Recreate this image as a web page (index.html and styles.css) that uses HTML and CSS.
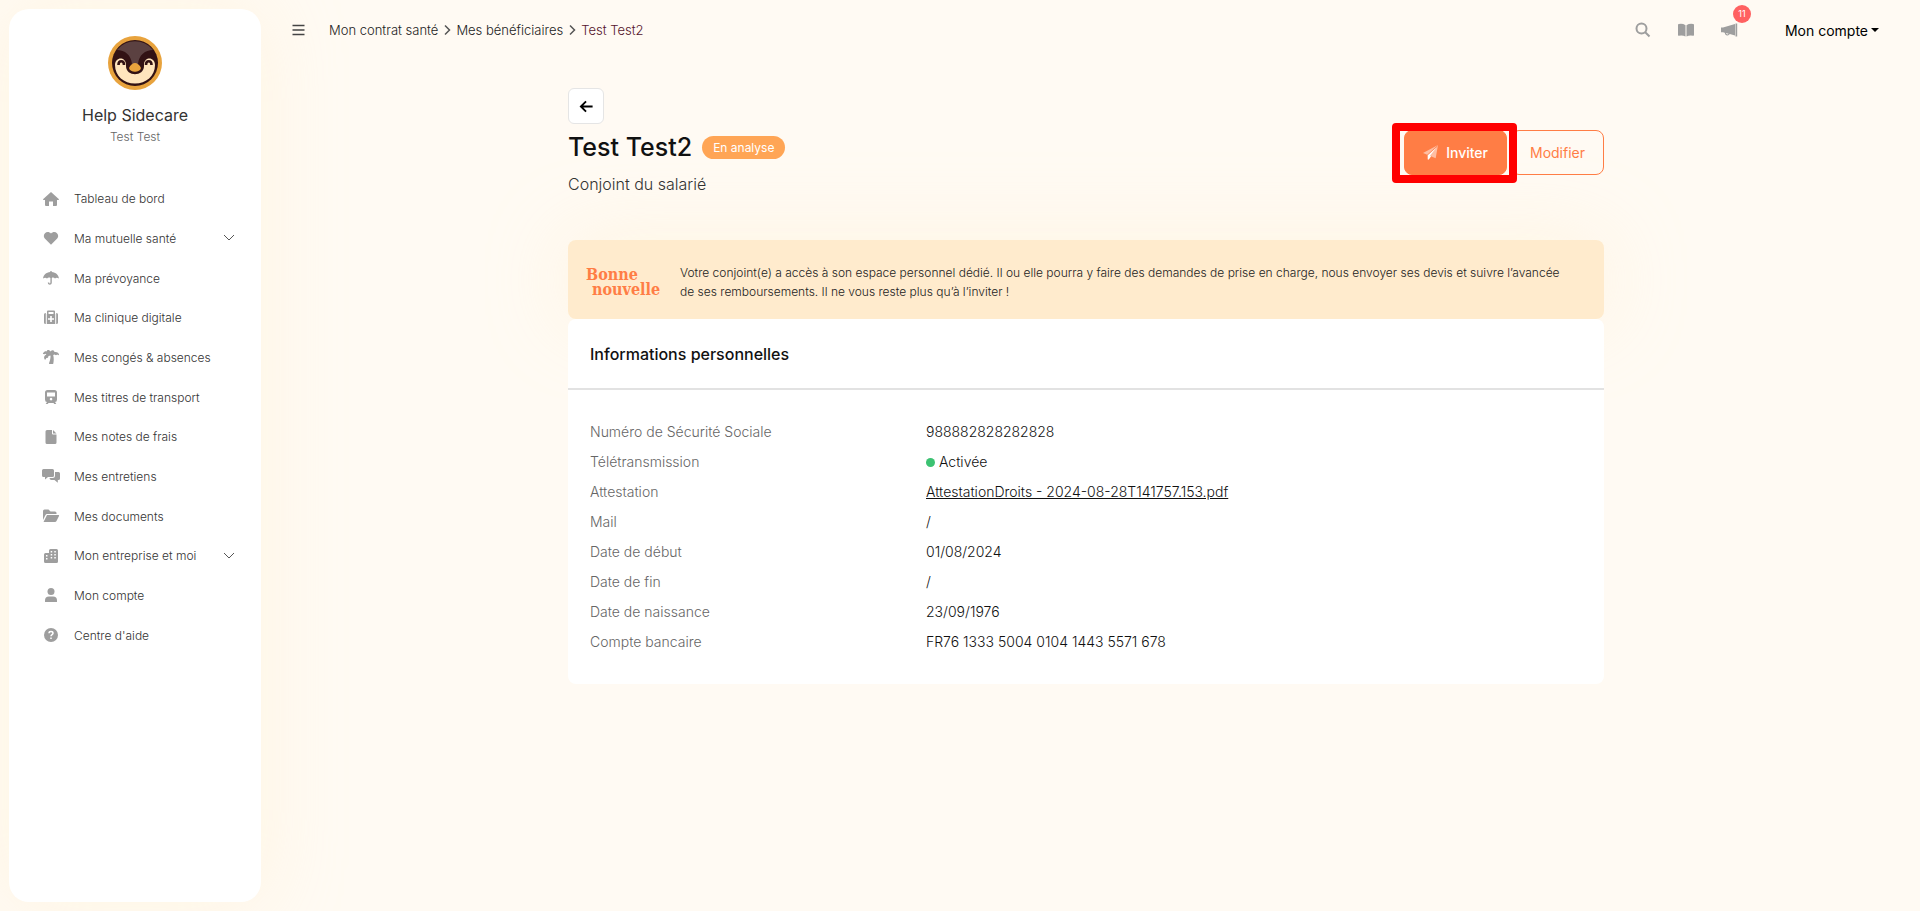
FILE: index.html
```html
<!DOCTYPE html>
<html lang="fr">
<head>
    <meta charset="UTF-8">
    <meta name="viewport" content="width=device-width, initial-scale=1.0">
    <title>Test Test2 - Mes bénéficiaires</title>
    <link rel="stylesheet" href="styles.css">
</head>
<body>

    <!-- Sidebar -->
    <aside class="sidebar">
        <div class="profile">
            <svg class="avatar" viewBox="0 0 54 54" aria-hidden="true">
                <circle cx="27" cy="27" r="27" fill="#e8a33d"/>
                <circle cx="27" cy="27" r="23" fill="#321214"/>
                <path d="M9 14A23 23 0 0 1 45 14C37 14 31 19 30 28H24C23 19 17 14 9 14Z" fill="#5b4141"/>
                <path d="M7 29C7 21 17 20 18 28V30C18 41 36 41 36 30V28C37 20 47 21 47 29C47 40 38 47.500 27 47.500S7 40 7 29Z" fill="#ffe5bd"/>
                <path d="M10.500 29C10.500 24 16 24 16 29M38 29C38 24 43.500 24 43.500 29" fill="none" stroke="#321214" stroke-width="2.600"/>
                <path d="M21 32C22 29 25 27 27 27S32 29 33 32C32 37 22 37 21 32Z" fill="#e8a33d"/>
            </svg>
            <p class="profile-name">Help Sidecare</p>
            <p class="profile-sub">Test Test</p>
        </div>

        <nav class="menu">
            <a href="#" class="menu-item">
                <svg viewBox="0 0 18 18"><path d="M9 2 1 9.300Q.8 10 1.800 10H3V15Q3 16 4 16H7V11.500H11V16H14Q15 16 15 15V10H16.200Q17.200 10 17 9.300Z"/></svg>
                <span>Tableau de bord</span>
            </a>
            <button type="button" class="menu-item">
                <svg viewBox="0 0 18 18"><path d="M9 15.800 2.800 9.500C-.5 5.500 5.200.2 9 4.500C12.800.2 18.500 5.500 15.200 9.500Z"/></svg>
                <span>Ma mutuelle santé</span>
                <svg class="chevron" viewBox="0 0 12 12"><path d="M1 3 6 8 11 3"/></svg>
            </button>
            <a href="#" class="menu-item">
                <svg viewBox="0 0 18 18"><path d="M8.300 2H9.700V3C14 3.400 16.500 6 17 9.500C15.500 8.500 14 8.500 13 9.500C12 8.500 10.800 8.300 9.800 9V13.500C9.800 16.500 5.800 16.500 5.800 13.500H7.200C7.200 14.800 8.400 14.800 8.400 13.500V9C7.200 8.300 6 8.500 5 9.500C4 8.500 2.500 8.500 1 9.500C1.500 6 4 3.400 8.300 3Z"/></svg>
                <span>Ma prévoyance</span>
            </a>
            <a href="#" class="menu-item">
                <svg viewBox="0 0 18 18"><path fill-rule="evenodd" d="M5 5V2.500Q5 1.500 6 1.500H12Q13 1.500 13 2.500V5H13.200V15H4.800V5ZM6.500 5H11.500V3H6.500ZM8.200 7V9.200H6V10.800H8.200V13H9.800V10.800H12V9.200H9.800V7ZM3.800 4H3.500Q2 4 2 5.500V13.500Q2 15 3.500 15H3.800ZM14.200 4H14.500Q16 4 16 5.500V13.500Q16 15 14.500 15H14.200Z"/></svg>
                <span>Ma clinique digitale</span>
            </a>
            <a href="#" class="menu-item">
                <svg viewBox="0 0 18 18"><path d="M8.500 3.500C10 1.500 12 2 12.500 4C15 3.600 17 5 17 6.800Q17 7.200 16.500 7.200L15.200 6.500 14 7.200 12.500 6.500 11.200 7C12 10 11.800 13 11.300 15.500Q11.200 16 10.500 16H7.500Q6.800 16 7 15.300C8.200 12 8.700 9.500 8.500 7.500L6.500 8 6 9.800 4.400 10 3.500 11.600Q2.800 11.900 2.500 11.300C1.500 9 2.500 7.400 4.400 6.500L3.500 5.800 2.400 6.300 1.200 6Q.7 5.800 1 5.300C1.800 3.500 3.400 3 5 3.300C4.700 1.500 7.500 1.500 8.500 3.500Z"/></svg>
                <span>Mes congés &amp; absences</span>
            </a>
            <a href="#" class="menu-item">
                <svg viewBox="0 0 18 18"><path fill-rule="evenodd" d="M5.500 2H12.500Q15 2 15 4.500V11.500Q15 14 13 14L14.300 16H12.300L11.500 15H6.500L5.700 16H3.700L5 14Q3 14 3 11.500V4.500Q3 2 5.500 2ZM5 4.500V8.500H13V4.500ZM9 9.800A1.300 1.300 0 1 0 9.100 9.800Z"/></svg>
                <span>Mes titres de transport</span>
            </a>
            <a href="#" class="menu-item">
                <svg viewBox="0 0 18 18"><path d="M5 2H10V5.500Q10 6.500 11 6.500H14.500V14.500Q14.500 16 13 16H5Q3.500 16 3.500 14.500V3.500Q3.500 2 5 2ZM11 2 14.500 5.500H11Z"/></svg>
                <span>Mes notes de frais</span>
            </a>
            <a href="#" class="menu-item">
                <svg viewBox="0 0 18 18"><path d="M1.500 2H10.500Q12 2 12 3.500V8.500Q12 10 10.500 10H6L3 12.500V10H1.500Q0 10 0 8.500V3.500Q0 2 1.500 2ZM13 5H16.500Q18 5 18 6.500V11.500Q18 13 16.500 13H15.800V15.800L12.500 13H9.500Q7.500 13 7.500 11H10.500Q13 11 13 8.500Z"/></svg>
                <span>Mes entretiens</span>
            </a>
            <a href="#" class="menu-item">
                <svg viewBox="0 0 18 18"><path d="M2.500 2.500H6.500L8.500 4.500H13Q14.500 4.500 14.500 6V7H5Q4 7 3.500 8L1 13V4Q1 2.500 2.500 2.500ZM5 8H16.500Q17.500 8 17 9L14.500 14Q14 15 13 15H1.500Z"/></svg>
                <span>Mes documents</span>
            </a>
            <button type="button" class="menu-item">
                <svg viewBox="0 0 18 18"><path fill-rule="evenodd" d="M7 6V3.500Q7 2 8.500 2H14.500Q16 2 16 3.500V14.500Q16 16 14.500 16H3.500Q2 16 2 14.500V7.500Q2 6 3.500 6ZM4 8V9.500H5.500V8ZM4 11V12.500H5.500V11ZM8.700 4V5.500H10.200V4ZM12.300 4V5.500H13.800V4ZM8.700 7V8.500H10.200V7ZM12.300 7V8.500H13.800V7ZM8.700 10V11.500H10.200V10ZM12.300 10V11.500H13.800V10Z"/></svg>
                <span>Mon entreprise et moi</span>
                <svg class="chevron" viewBox="0 0 12 12"><path d="M1 3 6 8 11 3"/></svg>
            </button>
            <a href="#" class="menu-item">
                <svg viewBox="0 0 18 18"><circle cx="9" cy="5.500" r="3.500"/><path d="M3 16V14.500Q3 10.500 7 10.500H11Q15 10.500 15 14.500V16Z"/></svg>
                <span>Mon compte</span>
            </a>
            <a href="#" class="menu-item">
                <svg viewBox="0 0 18 18"><circle cx="9" cy="9" r="7"/><path d="M7 7.300C7 5 11 5 11 7.300C11 8.700 9 8.500 9 10.200M9 11.400V13" fill="none" stroke="#fff" stroke-width="1.500"/></svg>
                <span>Centre d'aide</span>
            </a>
        </nav>
    </aside>

    <div class="page">
        <!-- Top bar -->
        <header class="topbar">
            <button type="button" class="icon-button burger" aria-label="Menu">
                <svg viewBox="0 0 14 14"><path d="M1 2.500H13M1 7H13M1 11.500H13"/></svg>
            </button>
            <nav class="breadcrumb">
                <a href="#">Mon contrat santé</a>
                <svg viewBox="0 0 8 12"><path d="M2 1.500 6.500 6 2 10.500"/></svg>
                <a href="#">Mes bénéficiaires</a>
                <svg viewBox="0 0 8 12"><path d="M2 1.500 6.500 6 2 10.500"/></svg>
                <a href="#" class="current">Test Test2</a>
            </nav>
            <div class="tools">
                <button type="button" class="icon-button" aria-label="Rechercher">
                    <svg viewBox="0 0 18 18"><path d="M11.500 11.500 15.500 15.500M12.500 7.500A5 5 0 1 1 2.500 7.500A5 5 0 0 1 12.500 7.500Z" fill="none" stroke="#9e9e9e" stroke-width="2"/></svg>
                </button>
                <button type="button" class="icon-button" aria-label="Guide">
                    <svg viewBox="0 0 18 18"><path d="M8.500 4.200V15.500Q5.500 14 1.800 14.800 1 15 1 14V4Q1 3.200 1.800 3 5.500 2.200 8.500 4.200ZM9.500 4.200V15.500Q12.500 14 16.200 14.800 17 15 17 14V4Q17 3.200 16.200 3 12.500 2.200 9.500 4.200Z"/></svg>
                </button>
                <button type="button" class="icon-button" aria-label="Nouveautés">
                    <svg viewBox="0 0 18 18"><path d="M1 6.500H3L15 3V14.500L9.800 13A2.700 2.700 0 0 1 4.700 11.800L3 11.300H1ZM6 12.100A1.400 1.400 0 0 0 8.600 12.700ZM15.500 2.500H17.200V15.500H15.500Z"/></svg>
                    <span class="badge">11</span>
                </button>
                <button type="button" class="account">Mon compte</button>
            </div>
        </header>

        <main class="content">
            <a href="#" class="back" aria-label="Retour">
                <svg viewBox="0 0 16 16"><path d="M14.500 8H2M7.500 2.500 2 8 7.500 13.500"/></svg>
            </a>

            <div class="heading">
                <div>
                    <div class="title-row">
                        <h1>Test Test2</h1>
                        <span class="status">En analyse</span>
                    </div>
                    <p class="relation">Conjoint du salarié</p>
                </div>
                <div class="actions">
                    <button type="button" class="btn btn-primary">
                        <svg viewBox="0 0 16 16"><path d="M16 0 0 8.500 4.500 10.500 16 0Z" opacity=".5"/><path d="M16 0 13.500 14 8.500 12 6 15.500V11.500L14.500 2.500Z" opacity=".5"/><path d="M14.500 2.500 5 10.800V15Q5 16 6 15.500L8.500 12.200 7.500 11.500Z"/></svg>
                        Inviter
                    </button>
                    <button type="button" class="btn btn-outline">Modifier</button>
                </div>
            </div>

            <section class="details">
                <div class="notice">
                    <p class="notice-logo"><span>Bonne</span><span class="second">nouvelle</span></p>
                    <p class="notice-text">Votre conjoint(e) a accès à son espace personnel dédié. Il ou elle pourra y faire des demandes de prise en charge, nous envoyer ses devis et suivre l’avancée de ses remboursements. Il ne vous reste plus qu’à l’inviter !</p>
                </div>

                <div class="card">
                    <h2>Informations personnelles</h2>
                    <dl class="infos">
                        <dt>Numéro de Sécurité Sociale</dt>
                        <dd>988882828282828</dd>
                        <dt>Télétransmission</dt>
                        <dd><span class="dot"></span>Activée</dd>
                        <dt>Attestation</dt>
                        <dd><a href="#">AttestationDroits - 2024-08-28T141757.153.pdf</a></dd>
                        <dt>Mail</dt>
                        <dd>/</dd>
                        <dt>Date de début</dt>
                        <dd>01/08/2024</dd>
                        <dt>Date de fin</dt>
                        <dd>/</dd>
                        <dt>Date de naissance</dt>
                        <dd>23/09/1976</dd>
                        <dt>Compte bancaire</dt>
                        <dd>FR76 1333 5004 0104 1443 5571 678</dd>
                    </dl>
                </div>
            </section>
        </main>
    </div>

</body>
</html>
```

FILE: styles.css
```css
* {
    box-sizing: border-box;
}

body {
    margin: 0;
    display: flex;
    min-height: 100vh;
    padding: 9px;
    background-color: #fffaf3;
    font-family: Inter, "Liberation Sans", sans-serif;
    font-size: 14px;
    font-weight: 300;
    color: #111;
}

h1, h2, p, dl, dd {
    margin: 0;
}

a {
    color: inherit;
    text-decoration: none;
}

button {
    padding: 0;
    border: none;
    background: none;
    font: inherit;
    color: inherit;
    cursor: pointer;
}

svg {
    display: block;
    flex-shrink: 0;
}

/* Sidebar */
.sidebar {
    width: 252px;
    flex-shrink: 0;
    padding-top: 27px;
    border-radius: 20px;
    background-color: #fff;
    box-shadow: 0 0 80px rgba(255, 240, 200, 0.4);
}

.profile {
    display: flex;
    flex-direction: column;
    align-items: center;
    text-align: center;
}

.avatar {
    width: 54px;
    height: 54px;
    margin-bottom: 13px;
}

.profile-name {
    font-size: 16px;
    font-weight: 400;
    line-height: 24px;
    color: #333;
}

.profile-sub {
    font-size: 12px;
    line-height: 20px;
    color: #666;
}

.menu {
    display: grid;
    grid-auto-rows: 1fr;
    height: 476px;
    margin-top: 32px;
    padding: 0 26px 0 33px;
}

.menu-item {
    display: flex;
    align-items: center;
    gap: 14px;
    font-size: 12px;
    color: #333;
    text-align: left;
}

.menu-item svg {
    width: 18px;
    height: 18px;
    fill: #9e9e9e;
}

.menu-item .chevron {
    width: 12px;
    height: 12px;
    margin-left: auto;
    fill: none;
    stroke: #555;
}

/* Top bar */
.page {
    flex: 1;
    min-width: 0;
}

.topbar {
    display: flex;
    align-items: center;
    height: 42px;
    padding: 0 32px 0 30px;
}

.icon-button {
    position: relative;
}

.icon-button svg {
    width: 18px;
    height: 18px;
    fill: #9e9e9e;
}

.burger {
    margin-right: 23px;
}

.burger svg {
    width: 15px;
    height: 14px;
    stroke: #444;
    stroke-width: 1.3;
}

.breadcrumb {
    display: flex;
    align-items: center;
    gap: 5px;
    font-size: 13px;
    color: #222;
}

.breadcrumb svg {
    width: 8px;
    height: 12px;
    fill: none;
    stroke: #555;
    stroke-width: 1.5;
}

.breadcrumb .current {
    color: #54142c;
}

.tools {
    display: flex;
    align-items: center;
    gap: 25px;
    margin-left: auto;
}

.badge {
    position: absolute;
    top: -16px;
    right: -13px;
    width: 18px;
    height: 18px;
    border-radius: 50%;
    background-color: #ff6161;
    color: #fff;
    font-size: 9px;
    font-weight: 400;
    line-height: 18px;
    text-align: center;
}

.account {
    display: flex;
    align-items: center;
    gap: 3px;
    margin-left: 22px;
    font-size: 14px;
    font-weight: 400;
    color: #000;
}

.account::after {
    content: "";
    border: 4px solid transparent;
    border-top-color: #000;
    border-bottom: none;
}

/* Beneficiary */
.content {
    max-width: 1060px;
    margin: 37px auto 0;
    padding: 0 12px;
}

.back {
    display: flex;
    align-items: center;
    justify-content: center;
    width: 36px;
    height: 36px;
    border: 1px solid #e5e5e5;
    border-radius: 6px;
    background-color: #fff;
}

.back svg {
    width: 15px;
    height: 15px;
    fill: none;
    stroke: #000;
    stroke-width: 2;
}

.heading {
    display: flex;
    justify-content: space-between;
    align-items: flex-start;
    padding-top: 6px;
}

.title-row {
    display: flex;
    align-items: center;
    gap: 10px;
}

h1 {
    font-size: 25px;
    font-weight: 500;
    line-height: 34px;
}

.status {
    padding: 0 11px;
    border-radius: 12px;
    background-color: #ffa555;
    color: #fff;
    font-size: 12px;
    font-weight: 400;
    line-height: 23px;
}

.relation {
    margin-top: 8px;
    font-size: 16px;
    line-height: 24px;
    color: #333;
}

.actions {
    display: flex;
    gap: 4px;
}

.btn {
    display: flex;
    align-items: center;
    gap: 8px;
    height: 45px;
    padding: 0 18px;
    border: 1px solid #ff7d45;
    border-radius: 8px;
    font-size: 14px;
    font-weight: 400;
}

.btn svg {
    width: 15px;
    height: 15px;
    fill: #fff;
}

.btn-primary {
    position: relative;
    background-color: #ff7d45;
    color: #fff;
    font-weight: 500;
}

/* red frame around the invite action */
.btn-primary::after {
    content: "";
    position: absolute;
    inset: -8px -11px -9px -13px;
    border: 8px solid #f00;
    border-radius: 4px;
}

.btn-outline {
    color: #ff7d45;
}

.details {
    margin-top: 44px;
}

.notice {
    display: flex;
    align-items: center;
    gap: 16px;
    min-height: 79px;
    padding: 4px 30px 0 18px;
    border-radius: 8px;
    background-color: #ffebcd;
    box-shadow: 0 0 80px rgba(255, 240, 200, 0.4);
}

.notice-logo {
    width: 78px;
    flex-shrink: 0;
    color: #ff7d45;
    font-family: "DejaVu Serif Condensed", "DejaVu Serif", serif;
    font-size: 16px;
    font-weight: 700;
    line-height: 15px;
}

.notice-logo span {
    display: block;
}

.notice-logo .second {
    padding-left: 6px;
}

.notice-text {
    padding-right: 8px;
    font-size: 12px;
    line-height: 19px;
    color: #222;
}

.card {
    position: relative;
    border-radius: 8px;
    background-color: #fff;
}

.card h2 {
    padding: 23px 22px 22px;
    border-bottom: 2px solid #e2e2e2;
    font-size: 16px;
    font-weight: 500;
    line-height: 24px;
}

.infos {
    display: grid;
    grid-template-columns: 336px 1fr;
    padding: 27px 22px;
    line-height: 30px;
}

.infos dt {
    color: #666;
}

.infos dd a {
    text-decoration: underline;
}

.dot {
    display: inline-block;
    width: 9px;
    height: 9px;
    margin-right: 4px;
    border-radius: 50%;
    background-color: #3cc272;
}
```
